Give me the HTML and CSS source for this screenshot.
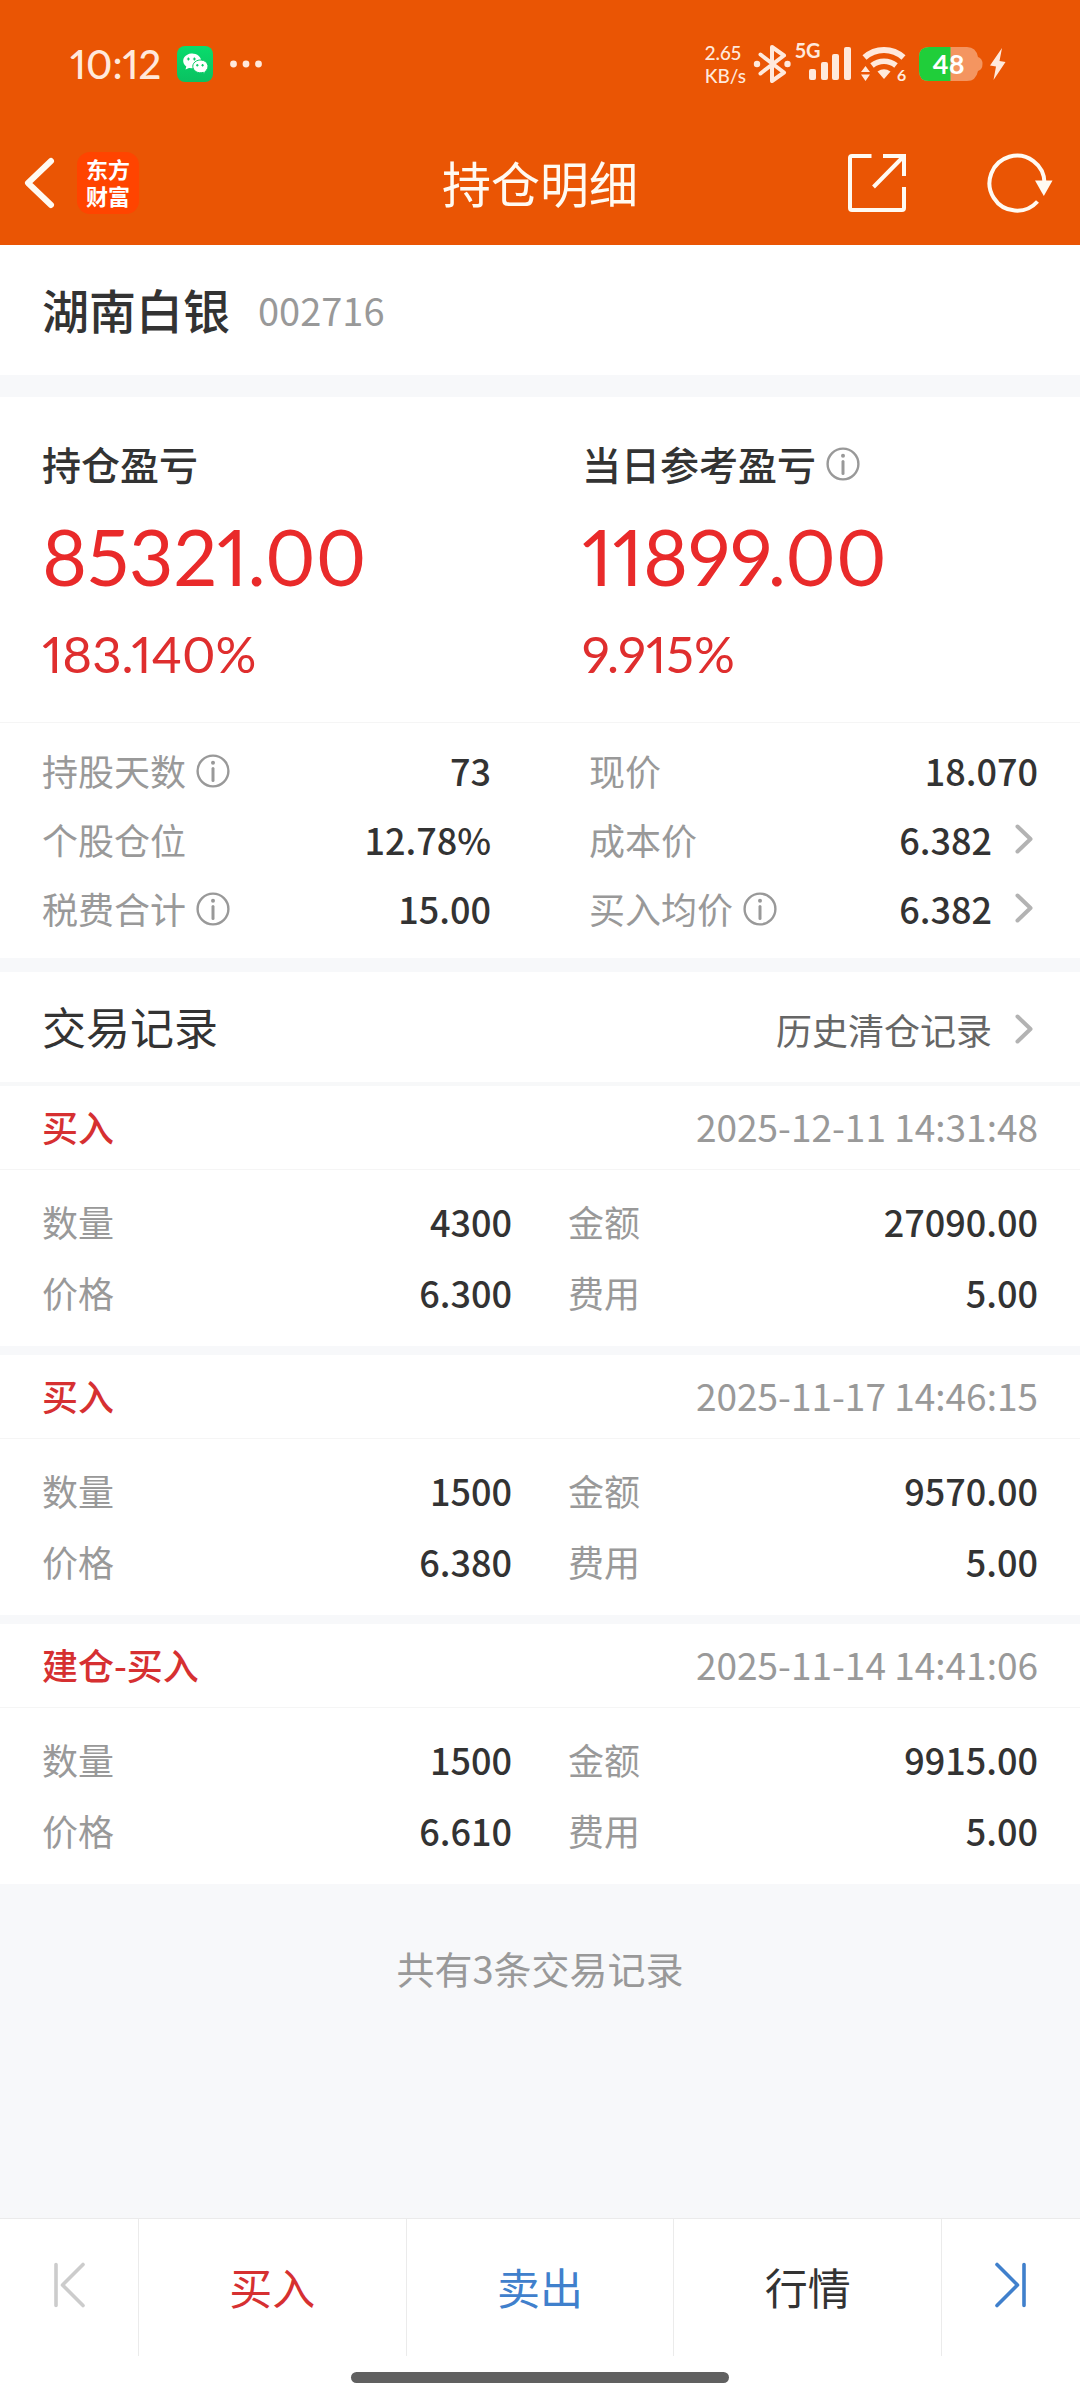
FILE: index.html
```html
<!DOCTYPE html>
<html lang="zh-CN">
<head>
<meta charset="utf-8">
<meta name="viewport" content="width=device-width, initial-scale=1">
<title>持仓明细</title>
<link rel="stylesheet" href="styles.css">
</head>
<body>
<svg width="0" height="0" class="sprite" aria-hidden="true">
  <symbol id="info" viewBox="0 0 34 34">
    <circle cx="17" cy="17" r="15.4" fill="none" stroke="#999" stroke-width="2.4"/>
    <circle cx="17" cy="8.8" r="2" fill="#999"/>
    <path d="M17 14.5v12" stroke="#999" stroke-width="3" stroke-linecap="round"/>
  </symbol>
  <symbol id="chevron" viewBox="0 0 20 32">
    <path d="M3.5 3.5 16.5 16 3.5 28.5" fill="none" stroke="#b3b3b3" stroke-width="4" stroke-linecap="round" stroke-linejoin="round"/>
  </symbol>
</svg>

<header class="top">
  <div class="status">
    <span class="clock">10:12</span>
    <svg class="wechat" width="36" height="36" viewBox="0 0 36 36" role="img" aria-label="微信">
      <defs><linearGradient id="g" x1="0" y1="0" x2="0" y2="1"><stop offset="0" stop-color="#08dc6c"/><stop offset="1" stop-color="#0ac161"/></linearGradient></defs>
      <rect width="36" height="36" rx="8" fill="url(#g)"/>
      <path d="M8.5 23.5 9.3 20.5A9 7.4 0 1 1 15 22.3L12 22z" fill="#fff"/>
      <path d="M27 28.2 26.3 26.3A7.6 6.4 0 1 1 28.4 25.2z" fill="#fff" stroke="#0acb65" stroke-width="1"/>
      <path d="M11.4 11.5v3M9.9 13h3M17.4 11.5v3M15.9 13h3M20.3 18v2.6M19 19.3h2.6M25.6 18v2.6M24.3 19.3h2.6" stroke="#0acb65" stroke-width="1.1"/>
    </svg>
    <svg class="more" width="32" height="8" viewBox="0 0 32 8" fill="#ffe9dc" aria-hidden="true"><circle cx="3.5" cy="4" r="3.4"/><circle cx="16" cy="4" r="3.4"/><circle cx="28.5" cy="4" r="3.4"/></svg>
    <div class="system">
      <span class="speed">2.65<br>KB/s</span>
      <svg class="bt" width="38" height="40" viewBox="0 0 38 40" role="img" aria-label="蓝牙">
        <path d="M7.500 10.500 31 28.500 19 37V3L31 11.500 7.500 29.500" fill="none" stroke="#ffe9dc" stroke-width="4" stroke-linejoin="round" stroke-linecap="round"/>
        <circle cx="4" cy="20" r="3.200" fill="#ffe9dc"/><circle cx="34.500" cy="20" r="3.200" fill="#ffe9dc"/>
      </svg>
      <svg class="signal" width="58" height="40" viewBox="0 0 58 40" fill="#ffe9dc" role="img" aria-label="5G 信号">
        <text x="0" y="18" class="tag">5G</text>
        <rect x="14" y="29" width="7" height="11" rx="2"/><rect x="26" y="22" width="7" height="18" rx="2"/><rect x="37" y="14" width="7" height="26" rx="2"/><rect x="49" y="7" width="7" height="33" rx="2"/>
      </svg>
      <svg class="wifi" width="46" height="36" viewBox="0 0 46 36" role="img" aria-label="Wi-Fi 6">
        <path d="M3.500 11.500A29 29 0 0 1 42.500 11.500" fill="none" stroke="#ffe9dc" stroke-width="6"/>
        <path d="M11 19.500A19 19 0 0 1 35 19.500" fill="none" stroke="#ffe9dc" stroke-width="5.500"/>
        <path d="M16.500 25.500Q23 21 29.500 25.500L23 33z" fill="#ffe9dc"/>
        <path d="M0 26 4.500 20 9 26zM0 28.500H9L4.500 35z" fill="#ffe9dc"/>
        <text x="36" y="35" class="six">6</text>
      </svg>
      <svg class="battery" width="64" height="34" viewBox="0 0 64 34" role="img" aria-label="电量 48%">
        <path d="M10 0H48Q57 0 59 10Q63.500 11.500 63.500 17T59 24Q57 34 48 34H10Q0 34 0 24V10Q0 0 10 0z" fill="#f49560"/>
        <path d="M31.500 0H10Q0 0 0 10V24Q0 34 10 34H31.500z" fill="#20ce3a"/>
        <text x="29.500" y="27" text-anchor="middle" class="level">48</text>
      </svg>
      <svg class="bolt" width="16" height="32" viewBox="0 0 16 32" aria-hidden="true"><path d="M12 0 0 17.500 6 18.500 3.500 32 15.500 14 9.500 13z" fill="#ffe9dc"/></svg>
    </div>
  </div>
  <nav class="titlebar">
    <div class="side">
      <button class="plain" aria-label="返回"><svg width="28" height="50" viewBox="3 0 28 50"><path d="M27 3 4 25 27 47" fill="none" stroke="#fffaf2" stroke-width="6" stroke-linecap="round" stroke-linejoin="round"/></svg></button>
      <a class="logo" href="#">东方<br>财富</a>
    </div>
    <h1 class="title">持仓明细</h1>
    <div class="side tools">
      <button class="plain" aria-label="分享"><svg width="60" height="60" viewBox="0 0 60 60" fill="none" stroke="#fffaf2" stroke-width="4"><path d="M24.500 3H5Q3 3 3 5V55Q3 57 5 57H55Q57 57 57 55V34"/><path d="M36 3H57V23M57 3 26.500 34"/></svg></button>
      <button class="plain" aria-label="刷新"><svg width="66" height="60" viewBox="0 0 66 60"><path d="M50.500 48.500A27.500 27.500 0 1 1 57.500 30" fill="none" stroke="#fffaf2" stroke-width="4"/><path d="M48 27.500H65.500L56.800 43z" fill="#fffaf2"/></svg></button>
    </div>
  </nav>
</header>

<main class="content">
  <section class="panel stock"><h2 class="stock-name">湖南白银</h2><span class="stock-code">002716</span></section>

  <section class="panel after-gap">
    <div class="summary">
      <div class="gain">
        <h3 class="gain-label">持仓盈亏</h3>
        <div class="gain-value">85321.00</div>
        <div class="gain-rate">183.140%</div>
      </div>
      <div class="gain">
        <h3 class="gain-label">当日参考盈亏<svg class="info"><use href="#info"/></svg></h3>
        <div class="gain-value">11899.00</div>
        <div class="gain-rate">9.915%</div>
      </div>
    </div>
    <dl class="metrics">
      <div class="pair"><dt>持股天数<svg class="info"><use href="#info"/></svg></dt><dd>73</dd></div>
      <div class="pair"><dt>现价</dt><dd>18.070</dd></div>
      <div class="pair"><dt>个股仓位</dt><dd>12.78%</dd></div>
      <div class="pair"><dt>成本价</dt><dd>6.382<svg class="chevron"><use href="#chevron"/></svg></dd></div>
      <div class="pair"><dt>税费合计<svg class="info"><use href="#info"/></svg></dt><dd>15.00</dd></div>
      <div class="pair"><dt>买入均价<svg class="info"><use href="#info"/></svg></dt><dd>6.382<svg class="chevron"><use href="#chevron"/></svg></dd></div>
    </dl>
  </section>

  <section class="panel records-head">
    <h2 class="records-title">交易记录</h2>
    <a class="history" href="#">历史清仓记录<svg class="chevron"><use href="#chevron"/></svg></a>
  </section>

  <div class="records">
    <article class="panel">
      <div class="record-head"><h3 class="side-label">买入</h3><time class="when">2025-12-11 14:31:48</time></div>
      <dl class="record-body">
        <div class="pair"><dt>数量</dt><dd>4300</dd></div><div class="pair"><dt>金额</dt><dd>27090.00</dd></div>
        <div class="pair"><dt>价格</dt><dd>6.300</dd></div><div class="pair"><dt>费用</dt><dd>5.00</dd></div>
      </dl>
    </article>
    <article class="panel">
      <div class="record-head"><h3 class="side-label">买入</h3><time class="when">2025-11-17 14:46:15</time></div>
      <dl class="record-body">
        <div class="pair"><dt>数量</dt><dd>1500</dd></div><div class="pair"><dt>金额</dt><dd>9570.00</dd></div>
        <div class="pair"><dt>价格</dt><dd>6.380</dd></div><div class="pair"><dt>费用</dt><dd>5.00</dd></div>
      </dl>
    </article>
    <article class="panel">
      <div class="record-head"><h3 class="side-label">建仓-买入</h3><time class="when">2025-11-14 14:41:06</time></div>
      <dl class="record-body">
        <div class="pair"><dt>数量</dt><dd>1500</dd></div><div class="pair"><dt>金额</dt><dd>9915.00</dd></div>
        <div class="pair"><dt>价格</dt><dd>6.610</dd></div><div class="pair"><dt>费用</dt><dd>5.00</dd></div>
      </dl>
    </article>
  </div>
  <p class="total">共有3条交易记录</p>
</main>

<footer class="bottom">
  <div class="actions">
    <button class="action step" aria-label="上一只" disabled><svg width="32" height="46" viewBox="0 0 32 46" fill="none" stroke="#ccc" stroke-width="3.600" stroke-linecap="round" stroke-linejoin="round"><path d="M3 2.500V43.500M30 2.500 9.500 23 30 43.500"/></svg></button>
    <button class="action buy">买入</button>
    <button class="action sell">卖出</button>
    <button class="action">行情</button>
    <button class="action step" aria-label="下一只"><svg width="32" height="46" viewBox="0 0 32 46" fill="none" stroke="#4080cc" stroke-width="3.600" stroke-linecap="round" stroke-linejoin="round"><path d="M29 2.500V43.500M2 2.500 22.500 23 2 43.500"/></svg></button>
  </div>
  <div class="home-bar"></div>
</footer>
</body>
</html>
```
FILE: styles.css
```css
* { box-sizing: border-box; }

body {
  margin: 0;
  min-height: 100vh;
  display: flex;
  flex-direction: column;
  background: #f7f8fa;
  color: #333;
  font-family: "Noto Sans CJK SC", sans-serif;
  font-size: 36px;
}

h1, h2, h3, p, dl, dd { margin: 0; font-weight: 400; }
a { color: inherit; text-decoration: none; }
button { font-family: inherit; }
svg { flex: none; display: block; overflow: visible; }
.sprite { position: absolute; }

/* large figures and status texts */
.clock, .speed, .gain-value, .gain-rate, .status text {
  font-family: Lato, "Noto Sans CJK SC", sans-serif;
  font-variant-numeric: proportional-nums;
}

/* orange header */
.top { background: #ea5504; color: #fffaf2; }
.status {
  height: 128px;
  padding: 0 74px 0 70px;
  display: flex;
  align-items: center;
  color: #ffe9dc;
}
.clock { width: 91px; font-size: 40px; font-weight: 500; line-height: 50px; }
.wechat { margin-left: 16px; }
.more { margin-left: 17px; }
.system { margin-left: auto; display: flex; align-items: center; }
.speed { font-size: 19px; line-height: 23px; font-weight: 500; }
.bt { margin-left: 7px; }
.signal { margin-left: 4px; margin-bottom: 8px; }
.wifi { margin-left: 8px; }
.battery { margin-left: 12px; }
.bolt { margin-left: 7px; }
.tag { font-size: 20px; font-weight: 700; }
.six { font-size: 16px; font-weight: 700; fill: #ffe9dc; }
.level { font-size: 27px; font-weight: 700; fill: #fff; }

.titlebar {
  height: 117px;
  padding: 0 27px 7px;
  display: grid;
  grid-template-columns: 1fr auto 1fr;
  align-items: center;
}
.side { display: flex; align-items: center; gap: 22px; }
.tools { justify-content: flex-end; gap: 80px; }
.plain { padding: 0; border: 0; background: none; }
.title { font-size: 49px; line-height: 68px; padding-bottom: 2px; }
.logo {
  width: 62px;
  height: 62px;
  padding-top: 3px;
  border-radius: 13px;
  background: #ff4400;
  color: #fff;
  font-size: 22px;
  font-weight: 700;
  line-height: 27px;
  text-align: center;
}

/* content panels */
.panel { background: #fff; }
.stock { height: 130px; padding: 0 42px 2px; display: flex; align-items: center; gap: 28px; }
.stock-name { font-size: 47px; font-weight: 500; line-height: 68px; }
.stock-code { font-size: 38px; color: #999; }
.after-gap { margin-top: 22px; }

.summary {
  display: grid;
  grid-template-columns: 1fr 1fr;
  border-bottom: 1px solid #f5f5f5;
}
.gain { padding: 38px 0 36px 42px; }
.gain-label {
  display: flex;
  align-items: center;
  font-size: 39px;
  font-weight: 500;
  line-height: 56px;
}
.gain-value { margin-top: 20px; font-size: 77px; line-height: 90px; color: #e92a2a; }
.gain-rate { margin-top: 21px; font-size: 51px; line-height: 64px; color: #df2e2e; }
.info { width: 34px; height: 34px; margin: 2px 0 0 10px; }
.chevron { width: 20px; height: 32px; margin: 0 4px 0 22px; }

.metrics {
  padding: 14px 42px;
  display: grid;
  grid-template-columns: 1fr 1fr;
  column-gap: 98px;
}
.pair { display: flex; align-items: center; justify-content: space-between; }
.pair dt, .pair dd { display: flex; align-items: center; padding-bottom: 3px; }
.pair dt { color: #999; }
.pair dd { font-weight: 500; }
.metrics .pair { height: 69px; }

.records-head {
  margin-top: 14px;
  height: 114px;
  padding: 0 42px;
  border-bottom: 4px solid #f7f8f9;
  display: flex;
  align-items: center;
  justify-content: space-between;
}
.records-title { padding-bottom: 2px; font-size: 44px; }
.history { display: flex; align-items: center; padding-top: 3px; color: #666; }

.records { display: grid; gap: 9px; }
.record-head {
  height: 84px;
  padding: 0 42px 4px;
  border-bottom: 1px solid #f5f5f5;
  display: flex;
  align-items: center;
  justify-content: space-between;
}
.side-label { font-size: 36px; font-weight: 500; color: #d63031; }
.when { font-size: 37px; color: #999; }
.record-body {
  padding: 17px 42px;
  display: grid;
  grid-template-columns: 1fr 1fr;
  column-gap: 56px;
}
.record-body .pair { height: 71px; }
.total { padding: 56px 42px; font-size: 38px; line-height: 56px; text-align: center; color: #999; }

/* bottom actions */
.bottom { margin-top: auto; background: #fff; border-top: 1px solid #ebebeb; }
.actions { display: grid; grid-template-columns: 138px 1fr 1fr 1fr 139px; height: 137px; }
.action {
  padding: 0 0 3px;
  border: 0;
  background: none;
  display: flex;
  align-items: center;
  justify-content: center;
  font-size: 43px;
  color: #333;
}
.action + .action { border-left: 1px solid #ebebeb; }
.actions .step { padding-bottom: 6px; }
.actions .buy { color: #d63031; }
.actions .sell { color: #4080cc; }
.home-bar {
  width: 35%;
  height: 11px;
  margin: 16px auto 17px;
  border-radius: 6px;
  background: #606060;
}
```
